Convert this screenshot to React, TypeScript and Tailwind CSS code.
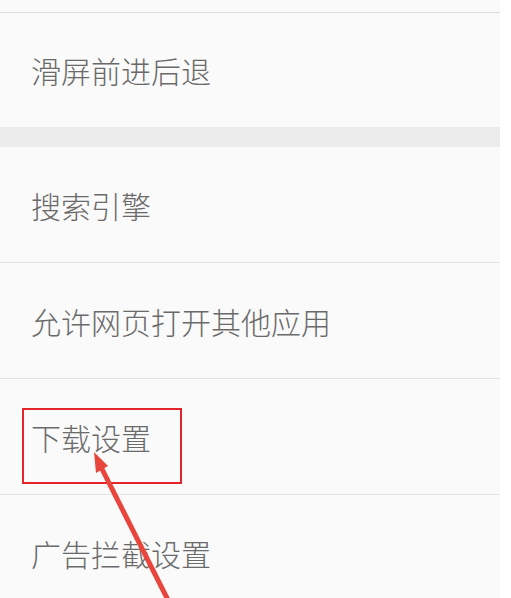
import React from 'react'

// ── Setting row ─────────────────────────────────────────────────────────────
function Row({ label, last }: { label: string; last?: boolean }) {
  return (
    <div className={`h-[116px] flex items-center px-[31px] ${last ? '' : 'border-b border-[#e3e3e3]'}`}>
      <span className="text-[30px] leading-none font-light text-[#6a6a6a]">{label}</span>
    </div>
  )
}

// ── MAIN ─────────────────────────────────────────────────────────────────────
export default function App() {
  return (
    <div
      className="relative w-[511px] h-[598px] overflow-hidden bg-white"
      style={{ fontFamily: "'Noto Sans CJK SC', 'Noto Sans', sans-serif" }}
    >
      <div className="w-[500px] bg-[#fafafa]">
        <div className="h-[13px] border-b border-[#dcdcdc]" />
        <div className="h-[114px] flex items-center px-[31px]">
          <span className="text-[30px] leading-none font-light text-[#6a6a6a]">滑屏前进后退</span>
        </div>
        <div className="h-[20px] bg-[#ececec]" />
        <Row label="搜索引擎" />
        <Row label="允许网页打开其他应用" />
        <Row label="下载设置" />
        <Row label="广告拦截设置" last />
      </div>

      {/* annotation: highlight box */}
      <div className="absolute left-[22px] top-[408px] w-[160px] h-[76px] border-2 border-[#e3262b]" />

      {/* annotation: arrow */}
      <svg className="absolute left-0 top-0" width="511" height="598" viewBox="0 0 511 598">
        <line x1="100" y1="465" x2="170" y2="604" stroke="#e8453c" strokeWidth="5" />
        <polygon points="94,452 108,466 96,473" fill="#e8453c" />
      </svg>
    </div>
  )
}
